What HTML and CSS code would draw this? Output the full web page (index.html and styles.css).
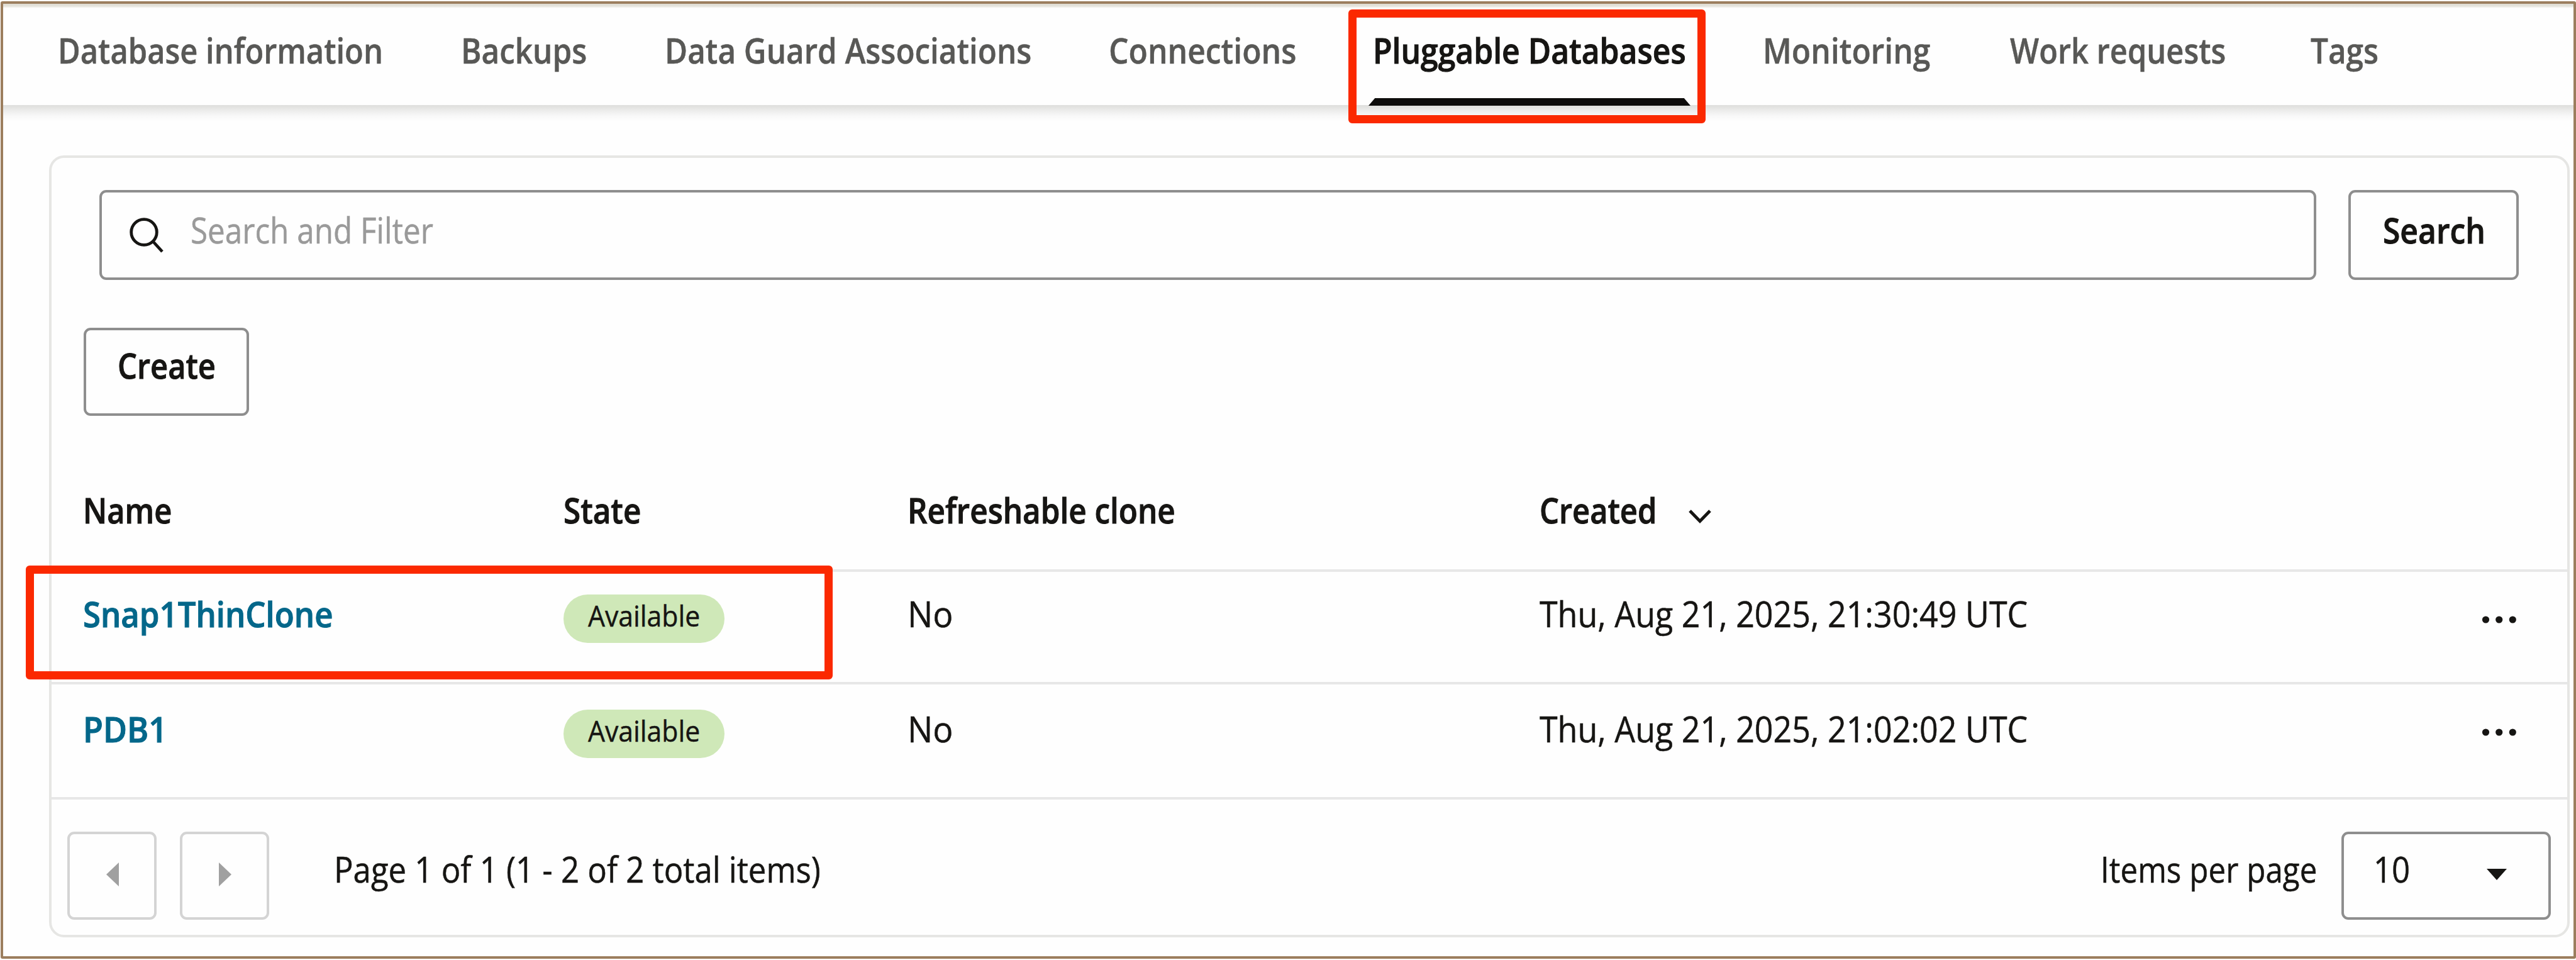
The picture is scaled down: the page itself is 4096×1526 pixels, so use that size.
FILE: index.html
```html
<!DOCTYPE html>
<html lang="en">
<head>
<meta charset="utf-8">
<title>Pluggable Databases</title>
<link rel="stylesheet" href="styles.css">
</head>
<body>
<div class="frame">
  <nav class="tabs">
    <a class="tab"><span class="t w87">Database information</span></a>
    <a class="tab"><span class="t w88">Backups</span></a>
    <a class="tab"><span class="t w88">Data Guard Associations</span></a>
    <a class="tab"><span class="t w89">Connections</span></a>
    <a class="tab active"><span class="t w89">Pluggable Databases</span></a>
    <a class="tab"><span class="t w89">Monitoring</span></a>
    <a class="tab"><span class="t w87">Work requests</span></a>
    <a class="tab"><span class="t w88">Tags</span></a>
  </nav>
  <main class="content">
    <section class="panel">
      <div class="search-row">
        <div class="search-field">
          <svg class="search-icon" viewBox="0 0 60 60" width="60" height="60"><circle cx="25" cy="25" r="20.3"/><path d="M39 39.5 54 56"/></svg>
          <span class="t w88 placeholder">Search and Filter</span>
        </div>
        <div class="btn search-btn"><span class="t w89">Search</span></div>
      </div>
      <div class="btn create-btn"><span class="t w87">Create</span></div>
      <div class="table">
        <div class="row head">
          <span class="t w87">Name</span>
          <span class="t w88">State</span>
          <span class="t w88">Refreshable clone</span>
          <div class="sort"><span class="t w87">Created</span><svg class="chevron" viewBox="0 0 40 26" width="40" height="26"><path d="M4 3 20 19.5 36 3"/></svg></div>
        </div>
        <div class="row first">
          <a class="t w91 link">Snap1ThinClone</a>
          <div class="pill"><span class="t w93">Available</span></div>
          <span class="t w96">No</span>
          <span class="t w93">Thu, Aug 21, 2025, 21:30:49 UTC</span>
          <svg class="dots" viewBox="0 0 56 14" width="56" height="14"><circle cx="6.5" cy="7" r="5.6"/><circle cx="27.7" cy="7" r="5.6"/><circle cx="49.3" cy="7" r="5.6"/></svg>
        </div>
        <div class="row second">
          <a class="t w93 link">PDB1</a>
          <div class="pill"><span class="t w93">Available</span></div>
          <span class="t w96">No</span>
          <span class="t w93">Thu, Aug 21, 2025, 21:02:02 UTC</span>
          <svg class="dots" viewBox="0 0 56 14" width="56" height="14"><circle cx="6.5" cy="7" r="5.6"/><circle cx="27.7" cy="7" r="5.6"/><circle cx="49.3" cy="7" r="5.6"/></svg>
        </div>
      </div>
      <div class="pager">
        <div class="page-btn"><svg viewBox="0 0 20 38" width="20" height="38"><path d="M20 0V38L0 19z"/></svg></div>
        <div class="page-btn"><svg viewBox="0 0 20 38" width="20" height="38"><path d="M0 0V38L20 19z"/></svg></div>
        <span class="t w91 page-info">Page 1 of 1 (1 - 2 of 2 total items)</span>
        <span class="t w88 per-page">Items per page</span>
        <div class="select"><span class="t w91">10</span><svg viewBox="0 0 32 18" width="32" height="18"><path d="M0 0H32L16 18z"/></svg></div>
      </div>
    </section>
  </main>
</div>
<div class="callout callout-tab"></div>
<div class="callout callout-row"></div>
</body>
</html>
```

FILE: styles.css
```css
* { box-sizing: border-box; }
body {
  margin: 0;
  width: 4096px;
  height: 1526px;
  padding: 2px 0 2px 1px;
  overflow: hidden;
  position: relative;
  background: #fff;
  color: #161513;
  font: 400 56px/60px "Open Sans", "Noto Sans", sans-serif;
}
svg { display: block; flex: none; }

.frame {
  height: 1522px;
  border: 4px solid #9c7e5e;
  border-radius: 3px;
  background: #fefefe;
}

/* Text set slightly narrower than the font's natural width */
.t {
  display: block;
  white-space: nowrap;
  transform-origin: 0 0;
  -webkit-text-stroke: .5px currentColor;
}
.w87 { transform: scaleX(.872); }
.w88 { transform: scaleX(.882); }
.w89 { transform: scaleX(.889); }
.w91 { transform: scaleX(.909); }
.w93 { transform: scaleX(.928); }
.w96 { transform: scaleX(.955); }

/* Tab bar */
.tabs {
  display: grid;
  grid-template-columns: 641px 324px 706px 420px 620px 393px 478px 1fr;
  height: 161px;
  padding: 43px 0 0 87px;
  background: linear-gradient(#dedbd2, #e6e4dd 4px, #fefefe 7px);
  color: #585856;
  font-weight: 600;
}
.tab.active { color: #161513; }
.tab.active::after {
  content: "";
  display: block;
  width: 512px;
  height: 12px;
  margin: 47px 0 0 -7px;
  background: #0d0c0b;
  clip-path: polygon(2% 0, 98% 0, 100% 100%, 0 100%);
}

.content {
  height: 1353px;
  padding: 80px 6px 0 73px;
  background: linear-gradient(#dfdfdd, #e2e2e0 3px, #ebebea 8px, #f8f8f8 17px, #fefefe 26px);
}
.panel {
  height: 1243px;
  padding-top: 51px;
  border: 4px solid #e6e6e4;
  border-radius: 24px;
  background: #fefefe;
}

/* Search and actions */
.search-row { display: flex; gap: 51px; padding: 0 77px 0 76px; }
.search-field, .btn, .select {
  display: flex;
  align-items: flex-start;
  border: 4px solid #8e8e8e;
  border-radius: 11px;
}
.search-field { flex: 1; height: 143px; padding: 29px 0 0 42px; gap: 39px; }
.search-icon { margin-top: 9px; fill: none; stroke: #161513; stroke-width: 4.8; }
.placeholder { color: #9a9a9a; }
.btn, .head, .link { font-weight: 600; }
.btn .t, .head .t, .link, .active .t { -webkit-text-stroke-width: 1px; }
.search-btn { width: 271px; height: 143px; padding: 29px 0 0 51px; }
.create-btn { width: 263px; height: 140px; margin: 76px 0 0 51px; padding: 25px 0 0 50px; }

/* Table */
.row {
  display: grid;
  grid-template-columns: 764px 547px 1005px 1fr auto;
  align-items: start;
  padding: 0 80px 0 50px;
  border-bottom: 4px solid #e7e7e7;
}
.head { height: 248px; padding-top: 119px; }
.first { height: 179px; padding-top: 36px; }
.second { height: 183px; padding-top: 40px; }
.sort { display: flex; }
.sort .t { width: 235px; }
.chevron { margin-top: 29px; fill: none; stroke: #161513; stroke-width: 5; }
.link { color: #04678a; }
.pill {
  width: 256px;
  height: 77px;
  padding-left: 39px;
  border-radius: 39px;
  background: #cfe8b8;
  font-size: 46px;
  line-height: 67px;
}
.dots { margin-top: 33px; fill: #161513; }
.second .dots { margin-top: 29px; }

/* Pagination */
.pager { display: flex; align-items: flex-start; padding: 51px 26px 0 25px; }
.page-btn {
  display: flex;
  width: 142px;
  height: 140px;
  margin-right: 37px;
  padding: 45px 0 0 58px;
  border: 4px solid #d4d4d4;
  border-radius: 11px;
}
.page-btn svg { fill: #a0a0a0; }
.page-info { margin: 29px 0 0 66px; }
.per-page { width: 383px; margin: 29px 0 0 auto; }
.select {
  justify-content: space-between;
  width: 333px;
  height: 140px;
  padding: 25px 66px 0 47px;
}
.select svg { margin-top: 30px; fill: #161513; }

/* Callout rectangles drawn over the page */
.callout { position: absolute; border: 13px solid #fb2900; border-radius: 6px; }
.callout-tab { left: 2144px; top: 15px; width: 568px; height: 181px; }
.callout-row { left: 41px; top: 899px; width: 1283px; height: 181px; }
```
